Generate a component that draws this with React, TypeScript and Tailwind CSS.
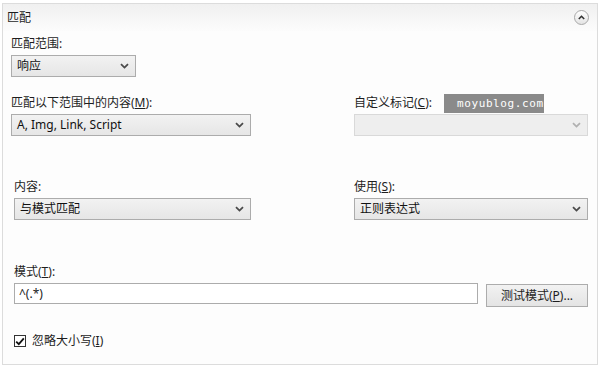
import React from "react";

const cjk = "font-['Segoe_UI','Noto_Sans','Noto_Sans_CJK_SC',sans-serif]";

function Chevron({ color = "#555" }: { color?: string }) {
  return (
    <svg width="9" height="6" viewBox="0 0 9 6" className="shrink-0">
      <path d="M1 1.2 L4.5 4.6 L8 1.2" fill="none" stroke={color} strokeWidth="1.8" />
    </svg>
  );
}

function Select({
  value,
  width,
  disabled = false,
}: {
  value?: string;
  width: string;
  disabled?: boolean;
}) {
  return (
    <div
      className={`${width} h-[22px] flex items-center justify-between pl-[5px] pr-[6px] border text-[12px] leading-none text-[#111] ${
        disabled
          ? "border-[#d9d9d9] bg-[#eeeeee]"
          : "border-[#acacac] bg-gradient-to-b from-[#f2f2f2] to-[#e6e6e6]"
      }`}
    >
      <span>{value}</span>
      <Chevron color={disabled ? "#b0b0b0" : "#4a4a4a"} />
    </div>
  );
}

function Label({ children }: { children: React.ReactNode }) {
  return <div className="h-[14px] text-[12px] leading-[14px] text-[#1e1e1e] mb-[4px]">{children}</div>;
}

export default function App() {
  return (
    <div className={`w-[600px] h-[366px] bg-white pt-[3px] pl-[2px] ${cjk}`}>
      <div className="w-[596px] h-[362px] border border-[#dcdcdc] bg-[#fdfdfd] flex flex-col">
        {/* header */}
        <div className="h-[27px] shrink-0 flex items-center justify-between pl-[4px] pr-[8px] bg-gradient-to-b from-[#f0f0f0] to-[#fcfcfc]">
          <span className="text-[12px] leading-none text-[#1e1e1e]">匹配</span>
          <div className="w-[15px] h-[15px] rounded-full border border-[#a8a8a8] bg-gradient-to-b from-[#ffffff] to-[#e4e4e4] flex items-center justify-center">
            <svg width="7" height="5" viewBox="0 0 7 5">
              <path d="M0.8 4 L3.5 1.3 L6.2 4" fill="none" stroke="#333" strokeWidth="1.6" />
            </svg>
          </div>
        </div>

        {/* 匹配范围 */}
        <div className="pl-[8px] pt-[6px]">
          <Label>匹配范围:</Label>
          <Select value="响应" width="w-[125px]" />
        </div>

        {/* row 2 */}
        <div className="flex pt-[19px]">
          <div className="pl-[8px] w-[351px]">
            <Label>
              匹配以下范围中的内容(<span className="underline">M</span>):
            </Label>
            <Select value="A, Img, Link, Script" width="w-[240px]" />
          </div>
          <div className="w-[234px] relative">
            <Label>
              自定义标记(<span className="underline">C</span>):
            </Label>
            <div className="absolute left-[90px] top-[-2px] w-[100px] h-[19px] bg-[#8a8a8a] text-white text-[11px] leading-[19px] pl-[13px] tracking-[0.6px] font-['DejaVu_Sans_Mono',monospace] whitespace-nowrap overflow-hidden">
              moyublog.com
            </div>
            <Select width="w-[234px]" disabled />
          </div>
        </div>

        {/* row 3 */}
        <div className="flex pt-[44px]">
          <div className="pl-[11px] w-[351px]">
            <Label>内容:</Label>
            <Select value="与模式匹配" width="w-[237px]" />
          </div>
          <div className="w-[234px]">
            <Label>
              使用(<span className="underline">S</span>):
            </Label>
            <Select value="正则表达式" width="w-[234px]" />
          </div>
        </div>

        {/* pattern */}
        <div className="pl-[11px] pt-[45px]">
          <Label>
            模式(<span className="underline">T</span>):
          </Label>
          <div className="flex items-start gap-[8px]">
            <div className="w-[464px] h-[21px] border border-[#acacac] bg-white flex items-center pl-[4px] text-[12px] leading-none text-[#222]">
              ^(.*)
            </div>
            <div className="w-[102px] h-[23px] mt-[1px] border border-[#acacac] bg-gradient-to-b from-[#f2f2f2] to-[#e4e4e4] flex items-center justify-center text-[12px] leading-none text-[#1e1e1e]">
              测试模式(<span className="underline">P</span>)...
            </div>
          </div>
        </div>

        {/* checkbox */}
        <div className="pl-[11px] pt-[28px] flex items-center gap-[6px]">
          <div className="w-[12px] h-[12px] border border-[#333] bg-white flex items-center justify-center">
            <svg width="10" height="9" viewBox="0 0 10 9">
              <path d="M1.2 4.6 L3.8 7.2 L8.8 1.4" fill="none" stroke="#111" strokeWidth="1.8" />
            </svg>
          </div>
          <span className="h-[12px] text-[12px] leading-[12px] text-[#1e1e1e]">
            忽略大小写(<span className="underline">I</span>)
          </span>
        </div>
      </div>
    </div>
  );
}
